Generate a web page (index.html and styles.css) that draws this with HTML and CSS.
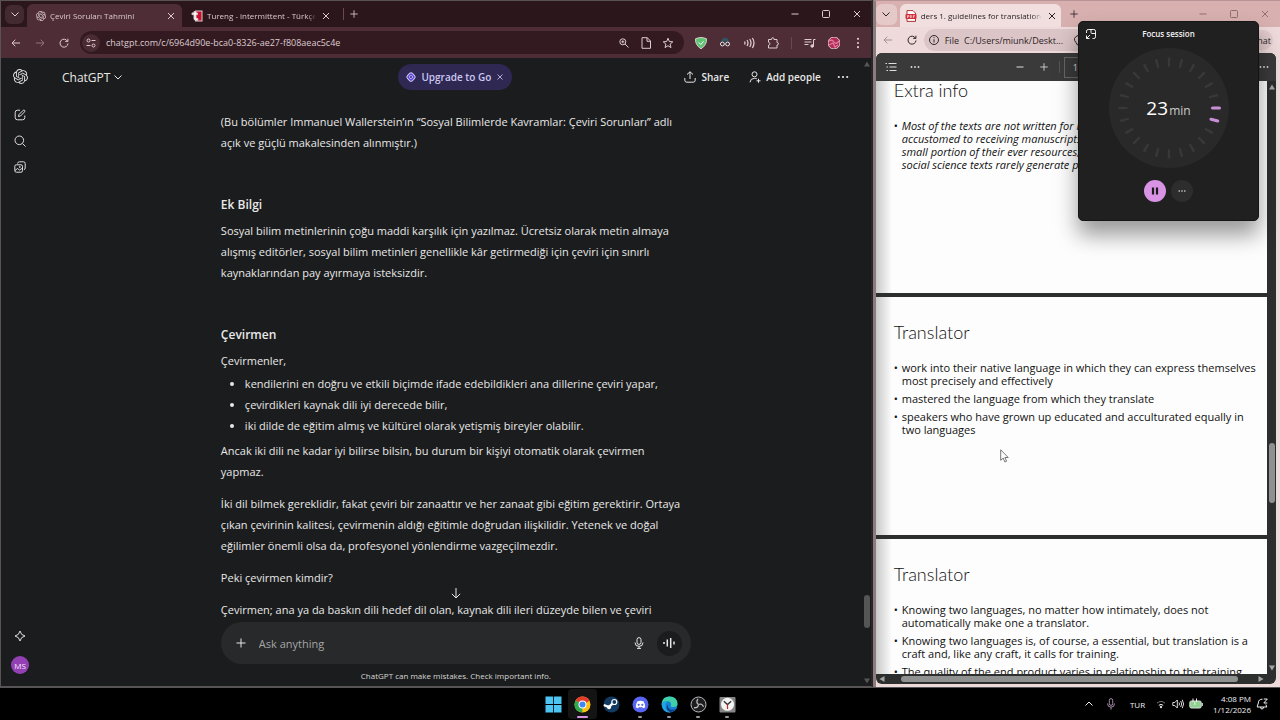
FILE: index.html
```html
<!DOCTYPE html>
<html lang="tr">
<head>
  <meta charset="UTF-8" />
  <meta name="viewport" content="width=device-width, initial-scale=1" />
  <title>Çeviri Soruları Tahmini</title>
  <link rel="stylesheet" href="styles.css">
</head>
<body>

  <svg class="defs" aria-hidden="true">
    <symbol id="i-knot" viewBox="0 0 24 24"><path fill="currentColor" d="M22.2819 9.8211a5.9847 5.9847 0 0 0-.5157-4.9108 6.0462 6.0462 0 0 0-6.5098-2.9A6.0651 6.0651 0 0 0 4.9807 4.1818a5.9847 5.9847 0 0 0-3.9977 2.9 6.0462 6.0462 0 0 0 .7427 7.0966 5.98 5.98 0 0 0 .511 4.9107 6.051 6.051 0 0 0 6.5146 2.9001A5.9847 5.9847 0 0 0 13.2599 24a6.0557 6.0557 0 0 0 5.7718-4.2058 5.9894 5.9894 0 0 0 3.9977-2.9001 6.0557 6.0557 0 0 0-.7475-7.0729zm-9.022 12.6081a4.4755 4.4755 0 0 1-2.8764-1.0408l.1419-.0804 4.7783-2.7582a.7948.7948 0 0 0 .3927-.6813v-6.7369l2.02 1.1686a.071.071 0 0 1 .038.0615v5.5826a4.504 4.504 0 0 1-4.4945 4.4849zm-9.6607-4.1254a4.4708 4.4708 0 0 1-.5346-3.0137l.142.0852 4.783 2.7582a.7712.7712 0 0 0 .7806 0l5.8428-3.3685v2.3324a.0804.0804 0 0 1-.0332.0615L9.74 19.9502a4.4992 4.4992 0 0 1-6.1408-1.6464zM2.3408 7.8956a4.485 4.485 0 0 1 2.3655-1.9728V11.6a.7664.7664 0 0 0 .3879.6765l5.8144 3.3543-2.0201 1.1685a.0757.0757 0 0 1-.071 0l-4.8303-2.7865A4.504 4.504 0 0 1 2.3408 7.872zm16.5963 3.8558L13.1038 8.364 15.1192 7.2a.0757.0757 0 0 1 .071 0l4.8303 2.7913a4.4944 4.4944 0 0 1-.6765 8.1042v-5.6772a.79.79 0 0 0-.407-.667zm2.0107-3.0231l-.142-.0852-4.7735-2.7818a.7759.7759 0 0 0-.7854 0L9.409 9.2297V6.8974a.0662.0662 0 0 1 .0284-.0615l4.8303-2.7866a4.4992 4.4992 0 0 1 6.6802 4.66zM8.3065 12.863l-2.02-1.1638a.0804.0804 0 0 1-.038-.0567V6.0742a4.4992 4.4992 0 0 1 7.3757-3.4537l-.142.0805L8.704 5.459a.7948.7948 0 0 0-.3927.6813zm1.0976-2.3654l2.602-1.4998 2.6069 1.4998v2.9994l-2.5974 1.4997-2.6067-1.4997Z"/></symbol>
    <symbol id="i-down" viewBox="0 0 12 12"><path d="M2.5 4.5 6 8l3.500-3.500"/></symbol>
    <symbol id="i-close" viewBox="0 0 12 12"><path d="M3 3l6 6M9 3l-6 6"/></symbol>
    <symbol id="i-plus" viewBox="0 0 12 12"><path d="M6 1.500v9M1.500 6h9"/></symbol>
    <symbol id="i-minus" viewBox="0 0 12 12"><path d="M2.500 6h7"/></symbol>
    <symbol id="i-square" viewBox="0 0 12 12"><rect x="2.500" y="2.500" width="7" height="7" rx="1"/></symbol>
    <symbol id="i-back" viewBox="0 0 12 12"><path d="M10 6H2M5.300 2.700 2 6l3.300 3.300"/></symbol>
    <symbol id="i-reload" viewBox="0 0 12 12"><path d="M9.500 4.200A4 4 0 1 0 10 6.500M9.900 1.700V4.400H7.200"/></symbol>
    <symbol id="i-dots" viewBox="0 0 12 12"><g fill="currentColor" stroke="none"><circle cx="1.800" cy="6" r="1.100"/><circle cx="6" cy="6" r="1.100"/><circle cx="10.200" cy="6" r="1.100"/></g></symbol>
  </svg>

  <div class="desktop">
    <div class="windows">

      <!-- Chrome -->
      <section class="chrome">
        <div class="tabstrip">
          <button class="tab-search" aria-label="Search tabs"><svg class="icon"><use href="#i-down"/></svg></button>
          <div class="tab active">
            <svg class="icon favicon"><use href="#i-knot"/></svg>
            <span class="tab-title">Çeviri Soruları Tahmini</span>
            <button aria-label="Close tab"><svg class="icon"><use href="#i-close"/></svg></button>
          </div>
          <div class="tab">
            <svg class="icon" viewBox="0 0 12 12" stroke="none"><rect x="4.500" y="1" width="6.500" height="10" fill="#c8102e"/><path d="M1 3h2V1.500h2V3h1.500v1.600H5v3.900h1.800v1.800H4.500Q3 10.300 3 8.500V4.600H1z" fill="#fff"/></svg>
            <span class="tab-title">Tureng - intermittent - Türkçe</span>
            <button aria-label="Close tab"><svg class="icon"><use href="#i-close"/></svg></button>
          </div>
          <span class="divider"></span>
          <button class="new-tab" aria-label="New tab"><svg class="icon"><use href="#i-plus"/></svg></button>
          <div class="win-controls">
            <button aria-label="Minimize"><svg class="icon"><use href="#i-minus"/></svg></button>
            <button aria-label="Maximize"><svg class="icon"><use href="#i-square"/></svg></button>
            <button aria-label="Close"><svg class="icon"><use href="#i-close"/></svg></button>
          </div>
        </div>

        <div class="toolbar">
          <button aria-label="Back"><svg class="icon"><use href="#i-back"/></svg></button>
          <button class="forward" aria-label="Forward"><svg class="icon"><use href="#i-back"/></svg></button>
          <button aria-label="Reload"><svg class="icon"><use href="#i-reload"/></svg></button>
          <div class="omnibox">
            <button class="site-info" aria-label="Site information"><svg class="icon" viewBox="0 0 12 12"><circle cx="3.500" cy="3.500" r="1.500"/><path d="M6.500 3.500h4M1.500 8.500h4"/><circle cx="8.500" cy="8.500" r="1.500"/></svg></button>
            <input type="text" aria-label="Address" value="chatgpt.com/c/6964d90e-bca0-8326-ae27-f808aeac5c4e">
            <button aria-label="Zoom"><svg class="icon" viewBox="0 0 12 12"><circle cx="4.800" cy="4.800" r="3"/><path d="M7 7l3.500 3.500M3.300 4.800h3M4.800 3.300v3"/></svg></button>
            <button aria-label="Reader"><svg class="icon" viewBox="0 0 12 12"><path d="M2 .7h5.300L10.500 4v7.300H2zM7 .7v3.600h3.500"/></svg></button>
            <button aria-label="Bookmark"><svg class="icon" viewBox="0 0 12 12"><path d="M6 1.200 7.300 4.500l3.500.3-2.700 2.300.9 3.500L6 8.700l-3 1.900.9-3.500L1.200 4.800l3.500-.3z"/></svg></button>
          </div>
          <div class="extensions">
            <button aria-label="AdGuard"><svg class="icon" viewBox="0 0 12 12" stroke="none"><path d="M.5 1.800Q3.500.5 6 .5t5.500 1.300Q12 8 6 11.800 0 8 .5 1.800z" fill="#5fc573"/><path d="M3.800 5.500 5.800 7.500 8.500 4.300" fill="none" stroke="#fff"/></svg></button>
            <button aria-label="Extension"><svg class="icon" viewBox="0 0 12 12"><path d="M2 4.500Q3 .8 6 .8t4 3.700z" fill="#2e5663" stroke="none"/><g stroke="#eee" fill="#3a2229"><circle cx="3.400" cy="7" r="1.900"/><circle cx="8.600" cy="7" r="1.900"/></g></svg></button>
            <button aria-label="Read aloud"><svg class="icon" viewBox="0 0 12 12" stroke="#3f7fe0"><path d="M1.500 4.500q1 1.500 0 3M4 3q2 3 0 6M6.700 2q2.600 4 0 8M9.400 1q3.200 5 0 10" stroke-width="1.300"/></svg></button>
            <button aria-label="Extensions"><svg class="icon" viewBox="0 0 12 12"><path d="M1.500 2.500h3q0-1.800 1.300-1.800T7 2.500h3v3q1.500 0 1.500 1.200T10 8v3H1.500V8.200Q3 8 3 6.800T1.500 5.300z"/></svg></button>
            <span class="divider"></span>
            <button aria-label="Media"><svg class="icon" viewBox="0 0 12 12"><path d="M.5 2.500h7M.5 5h7M.5 7.500h4M9.500 9V2.500h2"/><circle cx="8.200" cy="9" r="1.300" fill="currentColor"/></svg></button>
            <button aria-label="Profile"><svg class="icon" viewBox="0 0 12 12" stroke="none"><circle cx="6" cy="6" r="6" fill="#b52a5a"/><path d="M1 4Q4 2 6 5T11 4 M1 8l4-2 2 4 3-2" stroke="#dd7c9b" stroke-width="1.300" fill="none"/></svg></button>
            <button aria-label="Menu"><svg class="icon upright"><use href="#i-dots"/></svg></button>
          </div>
        </div>

        <div class="app">
          <nav class="rail">
            <a href="#" aria-label="Home"><svg class="icon big"><use href="#i-knot"/></svg></a>
            <a href="#" aria-label="New chat"><svg class="icon" viewBox="0 0 12 12"><path d="M6 1.200H3.500q-2.300 0-2.300 2.300v5q0 2.300 2.300 2.300h5q2.300 0 2.300-2.300V6.500M4.500 7.500l.5-2L9.200 1.300q.8-.6 1.400 0t0 1.500L6.500 7z"/></svg></a>
            <a href="#" aria-label="Search"><svg class="icon" viewBox="0 0 12 12"><circle cx="5.300" cy="5.300" r="4.300"/><path d="m8.500 8.500 3 3"/></svg></a>
            <a href="#" aria-label="Images"><svg class="icon" viewBox="0 0 12 12"><rect x=".8" y="3.800" width="7.700" height="7.400" rx="1.500"/><path d="M3.500 2.500Q3.800.8 5.500.8H9.500q1.700 0 1.700 1.700V7q0 1.500-1.300 1.700M1 9.500l2.500-2 2 1.500L8 7.500"/><circle cx="5.800" cy="6" r=".5"/></svg></a>
            <a href="#" class="rail-upgrade" aria-label="Upgrade"><svg class="icon" viewBox="0 0 12 12"><path d="M6 1Q6.800 5.200 11 6 6.800 6.800 6 11 5.200 6.800 1 6 5.200 5.200 6 1z"/></svg></a>
            <button class="user-badge">MS</button>
          </nav>

          <main class="chat">
            <header class="chat-header">
              <button class="model">ChatGPT <svg class="icon"><use href="#i-down"/></svg></button>
              <div class="upgrade">
                <svg class="icon" viewBox="0 0 12 12" stroke="none"><rect x="2.500" y="2.500" width="7" height="7" rx="2" transform="rotate(45 6 6)" fill="#5f45dc"/><path d="M6 4.200 7.800 6 6 7.800 4.200 6z" fill="#3a2c86"/></svg>
                <a href="#">Upgrade to Go</a>
                <button aria-label="Dismiss"><svg class="icon small"><use href="#i-close"/></svg></button>
              </div>
              <div class="chat-actions">
                <button><svg class="icon" viewBox="0 0 12 12"><path d="M6 8V.8M3 3.500 6 .8l3 2.700M.8 7v2.200q0 2 2 2h6.400q2 0 2-2V7"/></svg>Share</button>
                <button><svg class="icon" viewBox="0 0 12 12"><circle cx="5.500" cy="3.300" r="2.500"/><path d="M1 11.300Q1.300 7.300 5.500 7.300q1.500 0 2.300.5M9.500 7.800v4M7.500 9.800h4"/></svg>Add people</button>
                <button aria-label="More"><svg class="icon"><use href="#i-dots"/></svg></button>
              </div>
            </header>

            <div class="messages">
              <article>
                <p>(Bu bölümler Immanuel Wallerstein’ın “Sosyal Bilimlerde Kavramlar: Çeviri Sorunları” adlı<br>açık ve güçlü makalesinden alınmıştır.)</p>
                <h3>Ek Bilgi</h3>
                <p>Sosyal bilim metinlerinin çoğu maddi karşılık için yazılmaz. Ücretsiz olarak metin almaya<br>alışmış editörler, sosyal bilim metinleri genellikle kâr getirmediği için çeviri için sınırlı<br>kaynaklarından pay ayırmaya isteksizdir.</p>
                <h3>Çevirmen</h3>
                <p class="lead">Çevirmenler,</p>
                <ul>
                  <li>kendilerini en doğru ve etkili biçimde ifade edebildikleri ana dillerine çeviri yapar,</li>
                  <li>çevirdikleri kaynak dili iyi derecede bilir,</li>
                  <li>iki dilde de eğitim almış ve kültürel olarak yetişmiş bireyler olabilir.</li>
                </ul>
                <p>Ancak iki dili ne kadar iyi bilirse bilsin, bu durum bir kişiyi otomatik olarak çevirmen<br>yapmaz.</p>
                <p>İki dil bilmek gereklidir, fakat çeviri bir zanaattır ve her zanaat gibi eğitim gerektirir. Ortaya<br>çıkan çevirinin kalitesi, çevirmenin aldığı eğitimle doğrudan ilişkilidir. Yetenek ve doğal<br>eğilimler önemli olsa da, profesyonel yönlendirme vazgeçilmezdir.</p>
                <p>Peki çevirmen kimdir?</p>
                <p>Çevirmen; ana ya da baskın dili hedef dil olan, kaynak dili ileri düzeyde bilen ve çeviri</p>
              </article>
              <button class="scroll-down" aria-label="Scroll to bottom"><svg class="icon" viewBox="0 0 12 12"><path d="M6 1v10M1.800 6.800 6 11l4.200-4.200"/></svg></button>
            </div>

            <footer class="composer-area">
              <form class="composer">
                <button type="button" aria-label="Attach"><svg class="icon"><use href="#i-plus"/></svg></button>
                <input type="text" placeholder="Ask anything" aria-label="Ask anything">
                <button type="button" aria-label="Dictate"><svg class="icon" viewBox="0 0 12 12"><rect x="4" y=".6" width="4" height="6.800" rx="2"/><path d="M2 5.500Q2 9.400 6 9.400t4-3.900M6 9.400v2M4 11.400h4"/></svg></button>
                <button type="button" class="voice" aria-label="Voice mode"><svg class="icon" viewBox="0 0 12 12"><path d="M1 5v2M4.300 2.500v7M7.700 1v10M11 4.500v3" stroke-width="1.500"/></svg></button>
              </form>
              <p class="disclaimer">ChatGPT can make mistakes. Check important info.</p>
            </footer>
            <div class="chat-scroll">
              <svg viewBox="0 0 6 6"><path d="M3 .5 6 5.500H0z"/></svg>
              <span class="thumb"></span>
              <svg viewBox="0 0 6 6"><path d="M3 5.500 6 .5H0z"/></svg>
            </div>
          </main>
        </div>
      </section>

      <!-- Edge -->
      <section class="edge">
        <div class="tabstrip">
          <button class="tab-search" aria-label="Tab actions"><svg class="icon"><use href="#i-down"/></svg></button>
          <div class="tab active">
            <svg class="icon" viewBox="0 0 12 12"><path d="M2 .6h6l2.500 2.500v8.300H2z" fill="#fff" stroke="#a33"/><rect x=".5" y="4" width="11" height="5" rx="1" fill="#d22f3a" stroke="none"/><path d="M2.500 8V5.500h1.300v1.200H2.500M5.300 5.500v2h1v-2zM8.300 8V5.500h1.500M8.300 6.700h1.200" stroke="#fff" stroke-width=".6" fill="none"/></svg>
            <span class="tab-title">ders 1. guidelines for translation of</span>
            <button aria-label="Close tab"><svg class="icon"><use href="#i-close"/></svg></button>
          </div>
          <button class="new-tab" aria-label="New tab"><svg class="icon"><use href="#i-plus"/></svg></button>
          <div class="win-controls">
            <button aria-label="Minimize"><svg class="icon"><use href="#i-minus"/></svg></button>
            <button aria-label="Maximize"><svg class="icon"><use href="#i-square"/></svg></button>
            <button aria-label="Close"><svg class="icon"><use href="#i-close"/></svg></button>
          </div>
        </div>

        <div class="toolbar">
          <button class="faded" aria-label="Back"><svg class="icon"><use href="#i-back"/></svg></button>
          <button aria-label="Refresh"><svg class="icon"><use href="#i-reload"/></svg></button>
          <div class="omnibox">
            <svg class="icon" viewBox="0 0 12 12"><circle cx="6" cy="6" r="4.500"/><path d="M6 5.300v3.200M6 3.300v.9"/></svg>
            <span class="scheme">File</span>
            <input type="text" aria-label="Address" value="C:/Users/miunk/Deskt...">
            <svg class="icon" viewBox="0 0 12 12"><path d="M3 8.500Q1 6.500 1.500 4.500T6 1q4 0 4.500 3.500T9 8.500L8 11H4.500z"/></svg>
          </div>
          <button class="chat-pill">Chat</button>
        </div>

        <div class="viewer">
          <div class="pdf-toolbar">
            <button aria-label="Contents"><svg class="icon" viewBox="0 0 12 12"><path d="M.5 2.500h1.500M3.500 2.500h8M1.500 6h1.500M4.500 6h7M1.500 9.500h1.500M4.500 9.500h7"/></svg></button>
            <button aria-label="More tools"><svg class="icon small"><use href="#i-dots"/></svg></button>
            <div class="zoom-tools">
              <button aria-label="Zoom out"><svg class="icon"><use href="#i-minus"/></svg></button>
              <button aria-label="Zoom in"><svg class="icon small"><use href="#i-plus"/></svg></button>
              <span class="divider"></span>
              <input type="text" aria-label="Page" value="16">
            </div>
            <button class="pdf-more" aria-label="More"><svg class="icon small"><use href="#i-dots"/></svg></button>
          </div>

          <div class="doc">
            <div class="pages">
              <article class="slide italic">
                <h2>Extra info</h2>
                <ul>
                  <li>Most of the texts are not written for money. Editors<br>accustomed to receiving manuscripts for free<br>small portion of their ever resources, since<br>social science texts rarely generate profit</li>
                </ul>
              </article>
              <article class="slide">
                <h2>Translator</h2>
                <ul>
                  <li>work into their native language in which they can express themselves<br>most precisely and effectively</li>
                  <li>mastered the language from which they translate</li>
                  <li>speakers who have grown up educated and acculturated equally in<br>two languages</li>
                </ul>
              </article>
              <article class="slide">
                <h2>Translator</h2>
                <ul>
                  <li>Knowing two languages, no matter how intimately, does not<br>automatically make one a translator.</li>
                  <li>Knowing two languages is, of course, a essential, but translation is a<br>craft and, like any craft, it calls for training.</li>
                  <li>The quality of the end product varies in relationship to the training</li>
                </ul>
              </article>
            </div>
            <div class="vscroll">
              <svg viewBox="0 0 6 6"><path d="M3 .5 6 5.500H0z"/></svg>
              <span class="thumb"></span>
              <svg viewBox="0 0 6 6"><path d="M3 5.500 6 .5H0z"/></svg>
            </div>
          </div>
          <div class="hscroll">
            <svg viewBox="0 0 6 6"><path d="M.5 3 5.500 6V0z"/></svg>
            <span class="thumb"></span>
            <svg viewBox="0 0 6 6"><path d="M5.500 3 .5 6V0z"/></svg>
          </div>
        </div>
      </section>
    </div>

    <!-- Focus session, always on top -->
    <aside class="focus">
      <button class="focus-expand" aria-label="Back to full view"><svg class="icon" viewBox="0 0 12 12"><path d="M1.500 5V3.200q0-1.700 1.700-1.700h5.600q1.700 0 1.700 1.700v5.600q0 1.700-1.700 1.700H7.500M1.500 7.500v3h3M1.500 10.500 5 7M6 1.500v3q0 1 1 1h3.500"/></svg></button>
      <h2>Focus session</h2>
      <div class="dial">
        <svg viewBox="0 0 120 120">
          <circle cx="60" cy="60" r="60" fill="#292929"/>
          <circle class="ticks" cx="60" cy="60" r="46" pathLength="240"/>
          <path class="left" d="M103.500 60h7"/>
          <path class="left" d="M103.500 60h7" transform="rotate(15 60 60)"/>
        </svg>
        <p class="time"><strong>23</strong> min</p>
      </div>
      <div class="focus-buttons">
        <button class="pause" aria-label="Pause"><svg class="icon" viewBox="0 0 12 12"><path d="M4 2.500v7M8 2.500v7" stroke-width="2.200"/></svg></button>
        <button aria-label="More options"><svg class="icon"><use href="#i-dots"/></svg></button>
      </div>
    </aside>

    <svg class="cursor" viewBox="0 0 9 14"><path d="M.7.8v10.500l2.500-2.200 1.700 3.900 1.700-.8-1.700-3.700h3.300z"/></svg>

    <div class="taskbar">
      <div class="pinned">
        <button aria-label="Start"><svg viewBox="0 0 17 17"><path fill="#4cc5f3" d="M.5.5h7.600v7.600H.5zM8.900.5h7.600v7.600H8.900zM.5 8.900h7.600v7.600H.5zM8.900 8.900h7.600v7.600H8.900z"/></svg></button>
        <button class="running current" aria-label="Chrome"><svg viewBox="0 0 17 17"><circle cx="8.500" cy="8.500" r="8" fill="#fbc116"/><path d="M8.500 8.500 1.600 4.500A8 8 0 0 1 15.500 4.600z" fill="#e33b2e"/><path d="M8.500 8.500 8.300 16.500A8 8 0 0 1 1.600 4.500z" fill="#2da94f"/><path d="M8.500 4.600h7L9 9z" fill="#e33b2e"/><circle cx="8.500" cy="8.500" r="4" fill="#fff"/><circle cx="8.500" cy="8.500" r="3" fill="#4285f4"/></svg></button>
        <button aria-label="Steam"><svg viewBox="0 0 17 17"><circle cx="8.500" cy="8.500" r="8" fill="#12395f"/><path d="M.8 9 6 11l4-4" stroke="#fff" stroke-width="2.400" fill="none"/><circle cx="11.300" cy="6" r="2.500" fill="#12395f" stroke="#fff" stroke-width="1.200"/><circle cx="6" cy="11.300" r="2" fill="#fff"/></svg></button>
        <button class="running" aria-label="Discord"><svg viewBox="0 0 17 17"><circle cx="8.500" cy="8.500" r="8" fill="#5865f2"/><path d="M5.500 5.200q3-1 6 0 1.800 2.500 1.700 6-1.200.9-2.400 1l-.6-1.100q-1.700.4-3.400 0l-.6 1.100q-1.200-.1-2.400-1-.1-3.500 1.700-6z" fill="#fff"/><circle cx="6.700" cy="8.800" r="1.100" fill="#5865f2"/><circle cx="10.300" cy="8.800" r="1.100" fill="#5865f2"/></svg></button>
        <button class="running" aria-label="Edge"><svg viewBox="0 0 17 17"><circle cx="8.500" cy="8.500" r="8" fill="#1680d8"/><path d="M.6 7.500Q1.500.5 8.500.5q7.500.2 8 7 0 3.500-4 3.500-3 0-2.800-1.200Q11 6 7 5.200 3 4.800.6 7.500z" fill="#3fd0a8"/><path d="M.6 7.500Q3 4.800 7 5.200q-3 1.500-2.500 5Q5 15 9.500 16.400 1.500 17 .6 7.500z" fill="#1fa7e0"/><path d="M7 8.500Q6 13 11 13.800q2 .2 4.200-1Q12 17 8.500 15.800 3.500 13 7 8.500z" fill="#0f3f86"/></svg></button>
        <button class="running" aria-label="OBS"><svg viewBox="0 0 17 17"><circle cx="8.500" cy="8.500" r="7.500" fill="#1d1d1f" stroke="#bbb"/><g fill="none" stroke="#bbb" stroke-width="1.300"><path d="M8.500 8.500Q5.500 6.500 8 3"/><path d="M8.500 8.500Q5.500 6.500 8 3" transform="rotate(120 8.500 8.500)"/><path d="M8.500 8.500Q5.500 6.500 8 3" transform="rotate(240 8.500 8.500)"/></g></svg></button>
        <button class="running" aria-label="Clock"><svg viewBox="0 0 17 17"><rect x=".5" y="1" width="16" height="15.500" rx="1" fill="#858585"/><circle cx="8.500" cy="8.300" r="6.500" fill="#f4f4f4"/><path d="M4.800 5.200l3.700 3.300 3.700-3.300" stroke="#333" stroke-width="1.400" fill="none"/><path d="M8.500 8.500V13" stroke="#c42b1c" stroke-width="1.200"/></svg></button>
      </div>
      <div class="tray">
        <button aria-label="Hidden icons"><svg class="icon upside"><use href="#i-down"/></svg></button>
        <svg class="icon mic" viewBox="0 0 12 12"><rect x="4.300" y=".6" width="3.400" height="6.800" rx="1.700"/><path d="M2.500 5.500q0 3.700 3.500 3.700t3.500-3.700M6 9.200v2.400"/></svg>
        <button class="lang">TUR</button>
        <button class="status" aria-label="Network, sound, battery">
          <svg class="icon" viewBox="0 0 12 12"><path d="M2 5.200q4-3.500 8 0" stroke="#777"/><path d="M3.800 7.300q2.200-1.800 4.400 0"/><circle cx="6" cy="9" r=".8" fill="currentColor"/></svg>
          <svg class="icon" viewBox="0 0 12 12"><path d="M.8 4.500h2L5.300 2v8L2.800 7.500h-2zM7 4.500q1 1.500 0 3M8.700 3q2 3 0 6M10.300 1.800q2.600 4.200 0 8.400" stroke-width=".9"/></svg>
          <svg class="icon battery" viewBox="0 0 14 12"><rect x=".8" y="3" width="11.400" height="7" rx="1.500" fill="#8fd18f" stroke="#ddd"/><path d="M13.300 5v3M4 .5v3.500M7.500.5v3.500M5.800 4v3"/></svg>
        </button>
        <button class="clock">4:08 PM<br>1/12/2026</button>
        <button aria-label="Notifications"><svg class="icon" viewBox="0 0 12 12"><path d="M6.500 1.200Q2.500 1 2.300 5L1.200 9h9.600l-.9-2.500M4.500 9q0 2 1.500 2t1.500-2M7.800 1h3.500L7.800 5h3.500"/></svg></button>
      </div>
    </div>
  </div>

</body>
</html>
```
FILE: styles.css
```css
* {
  box-sizing: border-box;
  margin: 0;
  padding: 0;
}

body {
  font-family: "Open Sans", "Noto Sans", sans-serif;
  font-size: 10px;
  background-color: #000;
  overflow: hidden;
}

button, input {
  font: inherit;
  color: inherit;
  background: none;
  border: none;
  outline: none;
}

button {
  display: flex;
  align-items: center;
  justify-content: center;
  flex-shrink: 0;
  white-space: nowrap;
  cursor: pointer;
}

input {
  min-width: 0;
}

a {
  color: inherit;
  text-decoration: none;
}

.defs {
  display: none;
}

.icon {
  width: 12px;
  height: 12px;
  flex-shrink: 0;
  fill: none;
  stroke: currentColor;
  stroke-width: 1;
}

.icon use[href="#i-knot"] {
  stroke: none;
}

.small {
  width: 10px;
  height: 10px;
}

.divider {
  width: 1px;
  height: 12px;
  background: #6b4851;
}

.desktop {
  display: flex;
  flex-direction: column;
  height: 100vh;
  position: relative;
}

.windows {
  flex: 1;
  min-height: 0;
  display: grid;
  grid-template-columns: minmax(0, 15fr) minmax(0, 7fr);
}

/* Chrome window */
.chrome {
  display: flex;
  flex-direction: column;
  min-height: 0;
  background: #1b1c1d;
  border: 1px solid #5a5356;
  border-right: 2px solid #2a2527;
  color: #dccbcf;
}

.tabstrip {
  display: flex;
  align-items: center;
  height: 26px;
  flex-shrink: 0;
  background: #2b161b;
  padding-left: 4px;
}

.tab-search {
  width: 19px;
  height: 19px;
  border-radius: 6px;
  background: #432a31;
}

.tab {
  display: flex;
  align-items: center;
  gap: 4px;
  width: 155px;
  height: 23px;
  align-self: flex-end;
  padding: 0 5px 0 9px;
  border-radius: 6px 6px 0 0;
}

.tab .favicon {
  width: 10px;
  height: 10px;
}

.tab.active {
  margin-left: 3px;
  background: #4e2d36;
}

.tab-title {
  flex: 1;
  font-size: 8px;
  line-height: 12px;
  white-space: nowrap;
  overflow: hidden;
  mask-image: linear-gradient(to right, #000 92%, transparent);
}

.chrome .tabstrip > .divider {
  margin-left: 6px;
}

.new-tab {
  width: 20px;
  height: 20px;
}

.new-tab .icon {
  width: 10px;
  height: 10px;
}

.win-controls {
  display: flex;
  gap: 4px;
  margin-left: auto;
}

.win-controls button {
  width: 27px;
  height: 24px;
}

.toolbar {
  display: flex;
  align-items: center;
  height: 31px;
  flex-shrink: 0;
  background: #4e2d36;
  padding: 0 3px;
}

.toolbar > button {
  width: 24px;
  height: 24px;
}

.forward {
  transform: scaleX(-1);
  opacity: 0.45;
}

.omnibox {
  display: flex;
  align-items: center;
  gap: 10px;
  flex: 1;
  min-width: 0;
  height: 23px;
  margin-left: 4px;
  padding: 0 10px 0 2px;
  border-radius: 12px;
  background: #331a21;
  font-size: 9px;
}

.omnibox input {
  flex: 1;
}

.site-info {
  width: 18px;
  height: 18px;
  margin-right: -4px;
  border-radius: 50%;
  background: #4a2a33;
}

.extensions {
  display: flex;
  align-items: center;
  gap: 12px;
  padding: 0 4px 0 11px;
}

.upright {
  transform: rotate(90deg);
}

/* ChatGPT */
.app {
  display: flex;
  flex: 1;
  min-height: 0;
}

.rail {
  display: flex;
  flex-direction: column;
  align-items: center;
  gap: 14px;
  width: 38px;
  margin-right: 2px;
  padding: 11px 0 12px;
  color: #dedede;
}

.rail a {
  display: flex;
}

.rail .big {
  width: 15px;
  height: 15px;
  margin-bottom: 11px;
}

.rail-upgrade {
  margin-top: auto;
}

.user-badge {
  width: 18px;
  height: 18px;
  border-radius: 50%;
  background: #9340b5;
  color: #f5e6fa;
  font-size: 8px;
}

.chat {
  display: flex;
  flex-direction: column;
  flex: 1;
  min-width: 0;
  position: relative;
  color: #e8e8e8;
}

.chat-header {
  display: grid;
  grid-template-columns: 1fr auto 1fr;
  align-items: center;
  height: 38px;
  flex-shrink: 0;
  padding: 0 22px 0 21px;
}

.model {
  justify-self: start;
  gap: 2px;
  font-size: 12px;
}

.upgrade {
  display: flex;
  align-items: center;
  gap: 4px;
  height: 26px;
  padding: 0 7px;
  border-radius: 13px;
  background: #2e2852;
  color: #cdc7f2;
  font-weight: 600;
}

.chat-actions {
  display: flex;
  justify-self: end;
  gap: 20px;
  font-weight: 600;
}

.chat-actions button {
  gap: 5px;
}

.chat-actions button:last-child {
  margin-left: -4px;
}

.messages {
  flex: 1;
  min-height: 0;
  overflow: hidden;
  position: relative;
}

.messages article {
  width: 470px;
  margin: 0 auto;
  padding-top: 15px;
  font-size: 11px;
  line-height: 21px;
  white-space: nowrap;
}

.messages p {
  margin-bottom: 11px;
}

.messages h3 {
  margin: 41px 0 5px;
  font-size: 12px;
  font-weight: 600;
}

.messages .lead {
  margin-bottom: 2px;
}

.messages ul {
  margin-bottom: 4px;
  padding-left: 24px;
}

.scroll-down {
  position: absolute;
  left: 50%;
  bottom: 19px;
  width: 20px;
  height: 20px;
  margin-left: -10px;
}

.composer-area {
  width: 470px;
  margin: 0 auto;
}

.composer {
  display: flex;
  align-items: center;
  gap: 12px;
  height: 42px;
  padding: 0 9px 0 14px;
  border-radius: 21px;
  background: #28292a;
}

.composer input {
  flex: 1;
  font-size: 11px;
}

.composer input::placeholder {
  color: #a5a5a5;
}

.voice {
  width: 25px;
  height: 25px;
  border-radius: 50%;
  background: #1b1c1d;
}

.disclaimer {
  padding-top: 2px;
  font-size: 8px;
  line-height: 20px;
  text-align: center;
  color: #d6d6d6;
}

.chat-scroll {
  position: absolute;
  top: 0;
  right: 0;
  bottom: 0;
  width: 8px;
  display: flex;
  flex-direction: column;
  align-items: center;
  padding: 3px 0 2px;
}

.chat-scroll svg {
  width: 6px;
  height: 6px;
  fill: #555;
}

.chat-scroll .thumb {
  width: 6px;
  height: 33px;
  margin: auto 0 50px;
  border-radius: 3px;
  background: #555;
}

/* Edge window */
.edge {
  display: flex;
  flex-direction: column;
  min-width: 0;
  min-height: 0;
  background: #efdadb;
  border-top: 1px solid #b89496;
  border-left: 3px solid #8d7c7e;
  padding: 0 4px 3px 0;
  color: #2b2425;
}

.edge .tabstrip {
  background: #d8b0b0;
  margin-right: -4px;
}

.edge .tabstrip,
.edge .toolbar {
  padding-left: 0;
}

.edge .tab-search {
  width: 21px;
  height: 21px;
  background: #e5c8c8;
}

.edge .tab.active {
  width: 161px;
  gap: 4px;
  padding: 0 3px 0 5px;
  background: #f1dfdf;
}

.edge .new-tab {
  width: 26px;
}

.edge .win-controls {
  margin-right: 2px;
  color: #8f6f70;
}

.edge .toolbar {
  height: 26px;
  background: none;
}

.faded {
  opacity: 0.4;
}

.edge .omnibox {
  gap: 5px;
  flex: none;
  width: 165px;
  height: 22px;
  margin-left: 0;
  padding: 0 4px;
  background: #dcc5c7;
}

.edge .chat-pill {
  width: auto;
  height: 20px;
  margin-left: auto;
  padding: 0 2px;
  border-radius: 10px;
  background: #e2cbcc;
  font-size: 9px;
}

.viewer {
  display: flex;
  flex-direction: column;
  flex: 1;
  min-height: 0;
  border-radius: 6px;
  overflow: hidden;
  background: #2d2f2e;
}

.pdf-toolbar {
  display: flex;
  align-items: center;
  gap: 13px;
  height: 28px;
  flex-shrink: 0;
  padding: 0 7px 0 9px;
  background: #3a3a3a;
  color: #ddd;
}

.zoom-tools {
  display: flex;
  align-items: center;
  gap: 13px;
  margin-left: 81px;
}

.zoom-tools .divider {
  background: #555;
  margin-left: -3px;
}

.zoom-tools input {
  width: 40px;
  height: 21px;
  margin-left: -9px;
  padding-left: 8px;
  border: 1px solid #666;
  font-size: 9px;
}

.pdf-more {
  margin-left: auto;
}

.doc {
  display: flex;
  flex: 1;
  min-height: 0;
}

.pages {
  display: flex;
  flex-direction: column;
  gap: 4px;
  flex: 1;
  min-width: 0;
  overflow: hidden;
}

.slide {
  flex: 0 0 238px;
  padding: 19px 18px 0;
  background: linear-gradient(to right, #c9c9c9, #fdfdfd 16px);
  color: #111;
  overflow: hidden;
}

/* the first slide is scrolled partly under the toolbar */
.slide:first-child {
  margin-top: -26px;
}

.slide h2 {
  font-family: Lato, sans-serif;
  font-size: 18px;
  font-weight: 300;
  line-height: 32px;
}

.slide ul {
  list-style: none;
  margin-top: 13px;
  font-size: 11px;
  line-height: 13px;
  white-space: nowrap;
}

.slide li {
  display: flex;
  margin-bottom: 5px;
}

.slide li::before {
  content: "•";
  width: 8px;
  flex-shrink: 0;
  font-style: normal;
}

.italic li {
  font-style: italic;
}

.vscroll,
.hscroll {
  display: flex;
  align-items: center;
  flex-shrink: 0;
}

.vscroll {
  flex-direction: column;
  width: 9px;
  padding: 3px 0;
}

.vscroll svg,
.hscroll svg {
  width: 6px;
  height: 6px;
  fill: #a5a5a5;
}

.vscroll .thumb {
  width: 6px;
  height: 60px;
  margin: auto 0 162px;
  border-radius: 3px;
  background: #8f9191;
}

.hscroll {
  height: 10px;
  padding: 0 12px 0 3px;
}

.hscroll .thumb {
  flex: 1;
  height: 6px;
  margin: 0 20px 0 16px;
  border-radius: 3px;
  background: #8f9191;
}

/* Focus session */
.focus {
  position: absolute;
  top: 21px;
  right: 21px;
  width: 181px;
  height: 200px;
  display: flex;
  flex-direction: column;
  align-items: center;
  border: 1px solid #141414;
  border-radius: 5px;
  background: #202020;
  color: #f2f2f2;
  box-shadow: 0 14px 22px rgba(0, 0, 0, 0.4);
}

.focus-expand {
  position: absolute;
  top: 6px;
  left: 6px;
}

.focus h2 {
  margin-bottom: 3px;
  font-size: 8px;
  font-weight: 600;
  line-height: 23px;
}

.dial {
  display: grid;
  place-items: center;
  width: 120px;
  height: 120px;
}

.dial svg,
.dial .time {
  grid-area: 1 / 1;
}

.dial svg {
  width: 120px;
  height: 120px;
}

.ticks {
  fill: none;
  stroke: #383838;
  stroke-width: 9;
  stroke-dasharray: 2 8;
  stroke-dashoffset: 1;
}

.left {
  stroke: #c98fd6;
  stroke-width: 3;
  stroke-linecap: round;
}

.time {
  font-size: 12px;
  color: #ccc;
}

.time strong {
  margin-right: -2px;
  font-size: 19px;
  font-weight: 400;
  color: #fff;
}

.focus-buttons {
  display: flex;
  gap: 5px;
  margin-top: 12px;
}

.focus-buttons button {
  width: 22px;
  height: 22px;
  border-radius: 50%;
  background: #2d2d2d;
}

.focus-buttons .icon {
  width: 8px;
}

.focus-buttons .pause {
  background: #d893e4;
  color: #1a1a1a;
}

.focus-buttons .pause .icon {
  width: 12px;
}

.cursor {
  position: absolute;
  top: 449px;
  left: 1000px;
  width: 9px;
  height: 14px;
  fill: #fff;
  stroke: #555;
  stroke-width: 0.8;
}

/* Taskbar */
.taskbar {
  display: grid;
  grid-template-columns: 1fr auto 1fr;
  height: 33px;
  flex-shrink: 0;
  background: #000;
  border-top: 1px solid #555;
  color: #f0f0f0;
}

.pinned {
  grid-column: 2;
  display: flex;
  align-items: center;
}

.pinned button {
  position: relative;
  width: 29px;
  height: 30px;
}

.pinned svg {
  width: 17px;
  height: 17px;
}

.running::after {
  content: "";
  position: absolute;
  bottom: 1px;
  width: 4px;
  height: 2px;
  border-radius: 1px;
  background: #999;
}

.pinned .current {
  border-radius: 4px;
  background: #141414;
}

.current::after {
  width: 11px;
  background: #d893e4;
}

.tray {
  display: flex;
  align-items: center;
  justify-self: end;
  gap: 10px;
  padding-right: 12px;
  font-size: 8px;
}

.tray .mic {
  margin-right: 3px;
  color: #a58cab;
}

.upside {
  transform: rotate(180deg);
}

.status {
  gap: 5px;
}

.status .battery {
  width: 14px;
}

.clock {
  text-align: right;
  line-height: 11px;
}

.tray .clock {
  margin-right: -5px;
}
```
